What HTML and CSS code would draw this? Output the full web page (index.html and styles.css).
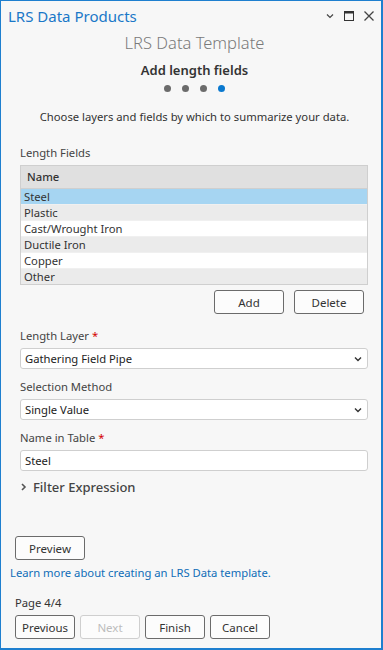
FILE: index.html
```html
<!DOCTYPE html>
<html>
<head>
    <title>LRS Data Products</title>
    <link rel="stylesheet" href="styles.css">
</head>
<body>
<div class="pane">
    <div class="titlebar">
        <span class="title">LRS Data Products</span>
        <span class="controls">
            <svg width="10" height="10" viewBox="0 0 10 10"><path d="M2 3.5 L5 6.5 L8 3.5" fill="none" stroke="#444" stroke-width="1.2"/></svg>
            <svg width="12" height="12" viewBox="0 0 12 12"><rect x="1.5" y="1.5" width="9" height="9" fill="none" stroke="#333" stroke-width="1"/><rect x="1.5" y="1.5" width="9" height="2" fill="#333"/></svg>
            <svg width="12" height="12" viewBox="0 0 12 12"><path d="M1.5 1.5 L10.5 10.5 M10.5 1.5 L1.5 10.5" stroke="#444" stroke-width="1.3"/></svg>
        </span>
    </div>

    <div class="header">
        <div class="wizard-title">LRS Data Template</div>
        <div class="step-title">Add length fields</div>
        <div class="dots">
            <span class="dot"></span><span class="dot"></span><span class="dot"></span><span class="dot active"></span>
        </div>
        <div class="description">Choose layers and fields by which to summarize your data.</div>
    </div>

    <div class="content">
        <div class="label first">Length Fields</div>
        <div class="grid">
            <div class="grid-header">Name</div>
            <div class="grid-row selected">Steel</div>
            <div class="grid-row alt">Plastic</div>
            <div class="grid-row">Cast/Wrought Iron</div>
            <div class="grid-row alt">Ductile Iron</div>
            <div class="grid-row">Copper</div>
            <div class="grid-row alt">Other</div>
        </div>
        <div class="grid-actions">
            <button class="btn">Add</button>
            <button class="btn">Delete</button>
        </div>

        <div class="label section">Length Layer <span class="req">*</span></div>
        <div class="combo">
            <span>Gathering Field Pipe</span>
            <svg width="10" height="8" viewBox="0 0 10 8"><path d="M2 2.5 L5 5.5 L8 2.5" fill="none" stroke="#333" stroke-width="1.4"/></svg>
        </div>

        <div class="label">Selection Method</div>
        <div class="combo">
            <span>Single Value</span>
            <svg width="10" height="8" viewBox="0 0 10 8"><path d="M2 2.5 L5 5.5 L8 2.5" fill="none" stroke="#333" stroke-width="1.4"/></svg>
        </div>

        <div class="label">Name in Table <span class="req">*</span></div>
        <div class="textbox">Steel</div>

        <div class="expander">
            <svg width="8" height="10" viewBox="0 0 8 10"><path d="M2 2 L5 5 L2 8" fill="none" stroke="#555" stroke-width="1.6"/></svg>
            <span>Filter Expression</span>
        </div>
    </div>

    <div class="footer">
        <button class="btn preview">Preview</button>
        <a class="learn" href="#">Learn more about creating an LRS Data template.</a>
        <div class="page">Page 4/4</div>
        <div class="nav">
            <button class="btn">Previous</button>
            <button class="btn" disabled>Next</button>
            <button class="btn">Finish</button>
            <button class="btn">Cancel</button>
        </div>
    </div>
</div>
</body>
</html>
```

FILE: styles.css
```css
html, body {
    margin:0;
    padding:0;
    background:#f7f7f7;
}

.pane {
    box-sizing:border-box;
    width:383px;
    height:650px;
    border:1px solid #1e7fcf;
    border-right-width:2px;
    border-bottom-width:2px;
    background:#f7f7f7;
    display:flex;
    flex-direction:column;
    font-family:"Noto Sans", "Open Sans", sans-serif;
    font-size:11.25px;
    color:#333;
}

.titlebar {
    height:30px;
    display:flex;
    align-items:center;
    justify-content:space-between;
    padding:0 6px 0 7px;
}

.title {
    color:#1a78c8;
    font-size:15px;
}

.controls {
    display:flex;
    align-items:center;
    gap:8px;
}

.header {
    padding-left:7px;
    text-align:center;
}

.wizard-title {
    font-size:16.5px;
    font-weight:300;
    line-height:24px;
    color:#7a7a7a;
}

.step-title {
    margin-top:6px;
    font-size:13px;
    font-weight:600;
    line-height:18px;
    color:#333;
}

.dots {
    margin-top:6px;
    display:flex;
    justify-content:center;
    gap:11px;
}

.dot {
    width:7px;
    height:7px;
    border-radius:50%;
    background:#6b6b6b;
}

.dot.active {
    background:#0a79cf;
}

.description {
    margin-top:17px;
    line-height:16px;
    font-size:11.25px;
}

.content {
    padding:0 13px 0 19px;
    display:flex;
    flex-direction:column;
}

.label {
    margin-top:10px;
    line-height:16px;
    color:#444;
}

.label.first {
    margin-top:20px;
}

.label.section {
    margin-top:14px;
}

.req {
    color:#d40000;
}

.grid {
    margin-top:4px;
    border:1px solid #cfcfcf;
    background:#fff;
}

.grid-header {
    height:22px;
    line-height:22px;
    padding-left:6px;
    background:#e0e0e0;
    font-weight:500;
    border-bottom:1px solid #cfcfcf;
}

.grid-row {
    height:15px;
    line-height:15px;
    padding-left:3px;
    border-bottom:1px solid #f0f0f0;
}

.grid-row:last-child {
    border-bottom:0;
}

.grid-row.alt {
    background:#ebebeb;
}

.grid-row.selected {
    background:#a6d5f2;
}

.grid-actions {
    margin-top:5px;
    display:flex;
    justify-content:flex-end;
    gap:10px;
    padding-right:4px;
}

.btn {
    box-sizing:border-box;
    height:24px;
    width:60px;
    padding:0;
    border:1px solid #6b6b6b;
    border-radius:3px;
    background:#fcfcfc;
    font-family:inherit;
    font-size:11.5px;
    color:#333;
}

.grid-actions .btn {
    width:70px;
}

.btn:disabled {
    border-color:#cfcfcf;
    color:#bdbdbd;
}

.combo, .textbox {
    box-sizing:border-box;
    margin-top:4px;
    height:21px;
    border:1px solid #cfcfcf;
    border-radius:3px;
    background:#fff;
    padding:0 4px;
    display:flex;
    align-items:center;
    justify-content:space-between;
    color:#222;
}

.expander {
    margin-top:7px;
    display:flex;
    align-items:center;
    gap:5px;
    font-size:13px;
    font-weight:500;
    line-height:18px;
    color:#444;
}

.footer {
    margin-top:auto;
    padding:0 0 9px 9px;
    display:flex;
    flex-direction:column;
    align-items:flex-start;
}

.preview {
    margin-left:5px;
    width:70px;
}

.learn {
    margin-top:5px;
    line-height:16px;
    color:#0f6db8;
    text-decoration:none;
}

.page {
    margin-top:14px;
    margin-left:5px;
    line-height:16px;
}

.nav {
    margin-top:4px;
    margin-left:5px;
    display:flex;
    gap:5px;
}
```
